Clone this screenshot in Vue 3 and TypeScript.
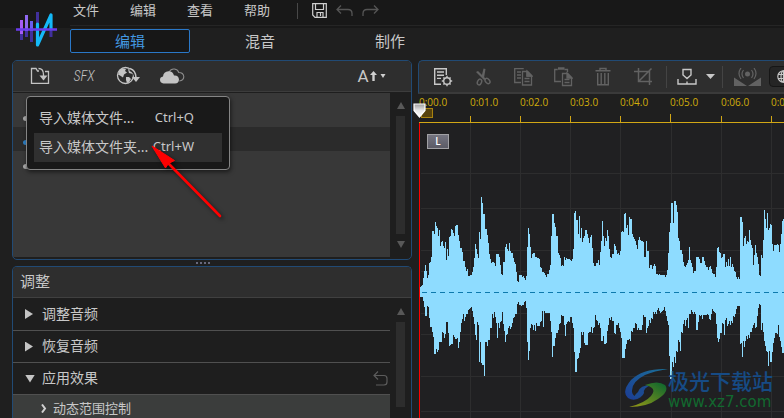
<script setup lang="ts">
import { ref } from 'vue'

const menus: string[] = ['文件', '编辑', '查看', '帮助']
const tabs: string[] = ['编辑', '混音', '制作']
const activeTab = ref(0)

interface MenuEntry { label: string; keys: string; hot: boolean }
const importMenu: MenuEntry[] = [
  { label: '导入媒体文件...', keys: 'Ctrl+Q', hot: false },
  { label: '导入媒体文件夹...', keys: 'Ctrl+W', hot: true },
]

const sections: { label: string; open: boolean }[] = [
  { label: '调整音频', open: false },
  { label: '恢复音频', open: false },
  { label: '应用效果', open: true },
]

const seconds: number[] = [0, 1, 2, 3, 4, 5, 6, 7]
const gridX: number[] = [50, 100, 150, 200, 251, 301, 351]
const gridY: number[] = [50, 85, 127, 148, 190, 211, 253, 288]

// Peak heights of the left channel, one value per pixel column.
const upper: number[] = [
  5, 6, 7, 14, 21, 27, 21, 14, 17, 29, 30, 35, 61, 61, 58,
  70, 66, 64, 56, 62, 46, 50, 51, 46, 44, 50, 32, 43, 36, 55, 56, 63, 62, 59, 56,
  66, 67, 67, 57, 51, 44, 44, 40, 31, 31, 25, 21, 23, 16, 16, 17, 17, 20, 25, 34,
  48, 43, 38, 34, 60, 53, 95, 89, 78, 78, 63, 63, 57, 49, 38, 33, 29, 30, 30, 29,
  26, 38, 38, 38, 35, 27, 18, 17, 30, 30, 45, 48, 43, 41, 49, 41, 39, 39, 34, 30,
  28, 20, 11, 10, 17, 17, 17, 15, 16, 14, 12, 16, 45, 64, 58, 45, 34, 38, 39, 39,
  35, 35, 34, 34, 33, 25, 24, 20, 20, 19, 17, 15, 18, 18, 22, 27, 56, 78, 78, 69,
  65, 56, 56, 39, 37, 34, 26, 27, 26, 35, 32, 34, 33, 33, 33, 32, 31, 33, 43, 79,
  81, 72, 72, 58, 76, 54, 64, 50, 54, 56, 62, 62, 58, 54, 49, 55, 57, 44, 29, 26,
  26, 29, 29, 32, 27,
  40, 51, 71, 56, 46, 54, 51, 62, 56, 43, 35, 34, 38, 38, 48, 46, 42, 38, 39, 37,
  41, 60, 61, 60, 78, 79, 64, 67, 57, 75, 73, 73, 58, 55, 53, 51, 47, 43, 52, 55,
  52, 51, 51, 50, 35, 35, 51, 41, 41, 24, 27, 27, 23, 26, 28, 26, 18, 18, 17, 18,
  17, 17, 17, 17, 17, 15, 17, 22, 39, 60, 69, 89, 89, 69, 91, 91, 87, 80, 54, 51,
  42, 42, 38, 30, 26, 25, 27, 29, 32, 45, 32, 29, 25, 19, 21, 21, 35, 35, 35, 33,
  29, 29, 35, 35, 31, 27, 25, 25, 22, 25, 26, 23, 19, 18, 18, 15, 25, 44, 45, 40,
  39, 34, 35, 38, 38, 25, 30, 26, 33, 26, 35, 25, 28, 25, 21, 20, 15, 13, 15, 13,
  75, 75, 70, 46, 54, 56, 48, 51, 50, 62, 52, 47, 44, 27, 37, 47, 39, 35, 28, 17,
  16, 37, 34, 52, 82, 73, 64, 79, 62, 64, 68, 67, 48, 41, 47, 47, 47, 48, 47, 40,
  48, 58, 71, 73,
]
const lower: number[] = [
  5, 5, 5, 9, 15, 24, 24, 14, 15, 26, 35, 35, 40, 45, 62,
  62, 57, 60, 58, 50, 50, 50, 40, 41, 46, 42, 30, 30, 41, 54, 53, 52, 52, 43, 45,
  47, 47, 46, 56, 50, 40, 31, 27, 22, 29, 25, 22, 22, 18, 17, 16, 15, 19, 25, 32,
  43, 48, 30, 33, 70, 50, 71, 73, 73, 84, 50, 50, 54, 48, 48, 36, 36, 22, 26, 20,
  25, 31, 46, 31, 36, 30, 29, 20, 32, 39, 50, 43, 42, 36, 34, 37, 35, 31, 26, 25,
  22, 22, 12, 10, 13, 13, 14, 13, 13, 10, 9, 16, 50, 68, 59, 36, 32, 33, 38, 33,
  39, 31, 34, 34, 34, 30, 29, 19, 35, 19, 21, 21, 21, 21, 21, 29, 40, 65, 54, 54,
  46, 41, 41, 38, 32, 31, 23, 24, 24, 33, 44, 32, 30, 29, 30, 25, 25, 31, 36, 60,
  80, 80, 67, 66, 61, 56, 40, 43, 40, 51, 53, 53, 53, 41, 40, 40, 35, 41, 36, 35,
  23, 28, 29, 33, 31,
  36, 49, 49, 44, 52, 52, 51, 39, 33, 26, 28, 25, 29, 29, 41, 42, 33, 33, 31, 36,
  40, 46, 66, 66, 66, 57, 52, 48, 48, 47, 49, 39, 40, 36, 36, 31, 32, 38, 36, 38,
  38, 38, 33, 23, 25, 25, 41, 36, 34, 28, 31, 26, 27, 20, 22, 20, 22, 18, 16, 19,
  21, 20, 19, 18, 15, 19, 24, 29, 33, 64, 87, 87, 70, 75, 65, 71, 59, 60, 48, 50,
  59, 40, 41, 32, 28, 34, 28, 26, 36, 22, 22, 18, 20, 22, 20, 22, 38, 38, 30, 23,
  24, 23, 27, 23, 23, 23, 23, 22, 23, 27, 28, 22, 17, 19, 20, 21, 32, 46, 50, 47,
  41, 41, 31, 32, 43, 28, 26, 34, 32, 29, 33, 29, 31, 24, 25, 22, 17, 14, 14, 14,
  52, 51, 65, 49, 55, 49, 44, 47, 43, 46, 40, 40, 36, 33, 31, 36, 35, 24, 16, 12,
  13, 38, 31, 40, 49, 54, 59, 60, 74, 59, 70, 70, 60, 51, 46, 41, 41, 42, 33, 45,
  49, 55, 61, 61,
]
const mid = 169
const wavePath: string = upper
  .map((up, x) => `M${x} ${mid - up}h1v${up + (lower[x] ?? up)}h-1z`)
  .join('')
</script>

<template>
  <div class="app">
    <header class="top">
      <svg class="logo" width="42" height="38" viewBox="0 0 42 38">
        <path d="M5.500 9v20" stroke="#a65cf5" stroke-width="3" />
        <path d="M10.500 4v22" stroke="#8f68f0" stroke-width="3" />
        <path d="M15.500 10v21" stroke="#6a5cf0" stroke-width="3" />
        <path d="M21.500 1v14M35 20v6M10.500 20v6M5.500 23v6M15.500 20v11" stroke="#41309c" stroke-width="3" />
        <path d="M21.500 13v21L35 4v14" fill="none" stroke="#14b9f8" stroke-width="3.200" stroke-linejoin="round" stroke-linecap="round" />
        <path d="M0 18.500h41" stroke="#6b3bee" stroke-width="2.600" />
      </svg>
      <div class="bars">
        <nav class="menubar">
          <button v-for="m in menus" :key="m" class="menu">{{ m }}</button>
          <span class="sep"></span>
          <button class="quick" aria-label="保存">
            <svg width="15" height="15" viewBox="0 0 15 15" fill="none" stroke="#cfcfcf" stroke-width="1.200">
              <path d="M.700.700h13.600v13.600H3L.700 12zM3.500 1v5.500h8V1M5 14V9.500h6V14M8.500 10v3" />
            </svg>
          </button>
          <button class="quick" aria-label="撤销">
            <svg width="17" height="12" viewBox="0 0 17 12" fill="none" stroke="#555" stroke-width="1.300">
              <path d="M5 .500L1 4.500l4 4M1 4.500h11q4 0 4 4V11" />
            </svg>
          </button>
          <button class="quick" aria-label="重做">
            <svg width="17" height="12" viewBox="0 0 17 12" fill="none" stroke="#555" stroke-width="1.300">
              <path d="M12 .500l4 4-4 4M16 4.500H5q-4 0-4 4V11" />
            </svg>
          </button>
        </nav>
        <nav class="tabs">
          <button v-for="(t, i) in tabs" :key="t" class="tab" :class="{ on: i === activeTab }" @click="activeTab = i">{{ t }}</button>
        </nav>
      </div>
    </header>

    <main class="work">
      <div class="side">
        <section class="panel library">
          <div class="tools">
            <button class="tool" aria-label="导入">
              <svg width="20" height="18" viewBox="0 0 20 18" fill="none" stroke="#c4c4c4" stroke-width="1.300">
                <path d="M9 4H7.500L6 1.500H1.500v14.800h17V4.500H15M8.500 1.500q5 0 5 6v5" />
                <path d="M9.500 8.500h8l-4 5z" fill="#c4c4c4" stroke="none" />
              </svg>
            </button>
            <button class="tool sfx">SFX</button>
            <button class="tool" aria-label="在线下载">
              <svg width="24" height="20" viewBox="0 0 24 20" fill="none" stroke="#c4c4c4" stroke-width="1.300">
                <circle cx="9.500" cy="9.500" r="8" />
                <path d="M3 5l3-2.500 4 .500-1 2 2 1.500-3 2-1 3-3-2-2-1zM10 11l3 0 2 2-2 3-2 1-1-3zM12 3l4 2 1 3-4-1z" fill="#c4c4c4" stroke="none" />
                <path d="M14 3q6 2 6 9" stroke="#2d2d2d" stroke-width="4" />
                <path d="M14 2.500q6 2 6 9.500" stroke-width="1.600" />
                <path d="M16 11h8l-4 5z" fill="#c4c4c4" stroke="none" />
              </svg>
            </button>
            <button class="tool" aria-label="云端">
              <svg width="26" height="17" viewBox="0 0 26 17">
                <path d="M10 4q2-3.500 5.500-3Q19 1.500 19.800 4.500q4.500 0 5 4 0 4-4.500 4.500" fill="none" stroke="#8d8d8d" stroke-width="1.100" />
                <path d="M4.500 15.500Q1 15 1 11.800 1 9 4 8.500 4.500 3.500 9.500 3.200q4.500 0 5.500 4.300 4.500-.500 5 4-.200 4-4 4z" fill="#c4c4c4" />
              </svg>
            </button>
            <button class="tool sort" aria-label="字号">
              <span>A</span>
              <svg width="16" height="12" viewBox="0 0 16 12" fill="#cfcfcf"><path d="M3.500 1L7 5H4.700v6H2.300V5H0zM10.500 4h5L13 8z" /></svg>
            </button>
          </div>
          <div class="body">
            <ul class="files">
              <li><i class="dot"></i></li>
              <li class="sel"><i class="dot"></i></li>
              <li><i class="dot"></i></li>
            </ul>
            <div class="scroll"><i class="up"></i><i class="thumb"></i><i class="down"></i></div>
          </div>
          <div class="popup" role="menu">
            <button v-for="e in importMenu" :key="e.keys" class="entry" :class="{ hot: e.hot }" role="menuitem">
              <span>{{ e.label }}</span><span class="keys">{{ e.keys }}</span>
            </button>
          </div>
          <svg class="pointer" width="76" height="76" viewBox="0 0 76 76">
            <path d="M18 17L69 69" stroke="#f00" stroke-width="2.600" stroke-linecap="round" />
            <path d="M1 -1L23.500 13.500 17.500 16.500 14.500 21z" fill="#f00" stroke="#f00" />
          </svg>
        </section>

        <div class="grip"><i></i><i></i><i></i><i></i></div>

        <section class="panel adjust">
          <h2>调整</h2>
          <div class="body">
            <div class="tree">
              <button v-for="s in sections" :key="s.label" class="row">
                <i class="arrow" :class="{ open: s.open }"></i>
                <span>{{ s.label }}</span>
                <svg v-if="s.open" class="reset" width="15" height="15" viewBox="0 0 15 15" fill="none" stroke="#5c5c5c" stroke-width="1.200">
                  <path d="M5 .500L1 4.500l4 4M1 4.500h10q3 0 3 3V11q0 3-3 3H3" />
                </svg>
              </button>
              <button class="row child">
                <svg width="6" height="9" viewBox="0 0 6 9" fill="none" stroke="#d0d0d0" stroke-width="2"><path d="M1 .500l3 4-3 4" /></svg>
                <span>动态范围控制</span>
              </button>
            </div>
            <div class="scroll"><i class="up"></i><i class="thumb"></i></div>
          </div>
        </section>
      </div>

      <section class="editor">
        <div class="tools edit">
          <button class="tool" aria-label="属性">
            <svg width="20" height="20" viewBox="0 0 20 20" fill="none" stroke="#c8c8c8" stroke-width="1.400">
              <path d="M8 17.300H1.700V1.700h11.600V8M4 5h7M4 8.200h7M4 11.400h4" />
              <circle cx="14" cy="14" r="3.300" />
              <path d="M14 8.800v2M14 17.200v2M8.800 14h2M17.200 14h2M10.400 10.400l1.300 1.300M16.300 16.300l1.300 1.300M17.600 10.400l-1.300 1.300M11.700 16.300l-1.300 1.300" />
            </svg>
          </button>
          <button class="tool" aria-label="剪切">
            <svg width="18" height="20" viewBox="0 0 18 20" fill="none" stroke="#626262" stroke-width="1.400">
              <path d="M2 5l2-1 8 8-2 1zM9.500 1.500l2 .500-1.500 9-2.500-1z" fill="#626262" stroke="none" />
              <ellipse cx="5.500" cy="15" rx="2" ry="3" transform="rotate(25 5.500 15)" />
              <ellipse cx="13.500" cy="14" rx="2" ry="3" transform="rotate(-40 13.500 14)" />
            </svg>
          </button>
          <button class="tool" aria-label="复制">
            <svg width="20" height="20" viewBox="0 0 20 20" fill="none" stroke="#626262" stroke-width="1.300">
              <path d="M8 15.500H1.700V1.700h9M4 5h4M4 8h4M4 11h4M9.500 4.500h5l4 4v9.500h-9zM14 4.500v4.500h4.500M11.500 11.500h5M11.500 14.500h5" />
              <path d="M14 4l5 5h-5z" fill="#626262" />
            </svg>
          </button>
          <button class="tool" aria-label="粘贴">
            <svg width="20" height="20" viewBox="0 0 20 20" fill="none" stroke="#626262" stroke-width="1.300">
              <path d="M8 14.500H1.700V2.500h3M11.500 2.500h3V5M9.500 6.500h5l4 4v8h-9zM11.500 12.500h5M11.500 15.500h5" />
              <path d="M5 1.500h6.500" stroke-width="2.400" /><path d="M14 6l5 5h-5z" fill="#626262" />
            </svg>
          </button>
          <button class="tool" aria-label="删除">
            <svg width="16" height="19" viewBox="0 0 16 19" fill="none" stroke="#626262" stroke-width="1.400">
              <path d="M.500 3.700h15M5 3.500V1.500h6v2M2.700 6v11.800h10.600V6M6.200 6v12M9.800 6v12" />
            </svg>
          </button>
          <button class="tool" aria-label="裁剪">
            <svg width="19" height="19" viewBox="0 0 19 19" fill="none" stroke="#626262" stroke-width="1.500">
              <path d="M0 4.500h15.500V18M4.500 1v13.500H18M4.500 14.500L17.500 1.500" />
            </svg>
          </button>
          <span class="bar"></span>
          <button class="tool marker" aria-label="标记">
            <svg width="20" height="18" viewBox="0 0 20 18" fill="none" stroke="#c8c8c8" stroke-width="1.400">
              <path d="M6 1.500h8V7l-4 3.500L6 7zM1 11v5h18v-5M10 13.500V16" />
            </svg>
          </button>
          <button class="tool drop" aria-label="标记选项">
            <svg width="9" height="5" viewBox="0 0 9 5"><path d="M0 0h9L4.500 5z" fill="#c8c8c8" /></svg>
          </button>
          <span class="bar"></span>
          <button class="tool fade" aria-label="淡化">
            <svg width="27" height="18" viewBox="0 0 27 18" fill="#626262">
              <path d="M0 9.500L13 18H0zM27 9.500L14 18h13z" />
              <circle cx="13.500" cy="6" r="2.500" />
              <path d="M9.500 2q-3 4 0 8M17.500 2q3 4 0 8M7 0Q3 5.500 7 11M20 0q4 5.500 0 11" fill="none" stroke="#626262" stroke-width="1.200" />
            </svg>
          </button>
          <button class="view" aria-label="频谱">
            <svg width="13" height="13" viewBox="0 0 13 13" fill="none" stroke="#c8c8c8" stroke-width="1.200">
              <circle cx="6.500" cy="6.500" r="5.700" /><ellipse cx="6.500" cy="6.500" rx="2.500" ry="5.700" /><path d="M1 4.500h11M1 8.500h11M6.500 1v11" />
            </svg>
          </button>
        </div>
        <div class="ruler">
          <span v-for="s in seconds" :key="s" class="tick" :class="{ major: s === 5, first: s === 0 }">0:0{{ s }}.0</span>
          <i class="range"></i>
          <svg class="head" width="14" height="15" viewBox="0 0 14 15">
            <defs><linearGradient id="knob" x2="0" y2="1"><stop offset="0" stop-color="#9c9c9c" /><stop offset=".500" stop-color="#e8e8e8" /><stop offset="1" stop-color="#fff" /></linearGradient></defs>
            <path d="M1 1h11v6.500L6.500 14 1 7.500z" fill="url(#knob)" stroke="#fff" stroke-width="1.200" />
          </svg>
        </div>
        <div class="track">
          <svg class="wave" width="364" height="295" viewBox="0 0 364 295" shape-rendering="crispEdges">
            <g fill="#2d2d2e">
              <rect v-for="x in gridX" :key="'x' + x" :x="x" y="0" width="1" height="295" />
              <rect v-for="y in gridY" :key="'y' + y" x="1" :y="y" width="363" height="1" />
            </g>
            <path :d="wavePath" fill="#8edcff" />
            <path d="M2 169.500h362" stroke="#0d79ad" stroke-dasharray="5 4" />
          </svg>
          <span class="channel">L</span>
          <div class="mark">
            <svg width="43" height="42" viewBox="0 0 43 42">
              <defs>
                <linearGradient id="blue" x1="0" y1="1" x2="1" y2="0"><stop offset="0" stop-color="#1c3c94" /><stop offset="1" stop-color="#1b7199" /></linearGradient>
                <linearGradient id="green" x1="0" y1="1" x2="1" y2="0"><stop offset="0" stop-color="#9a9a16" /><stop offset="1" stop-color="#08652f" /></linearGradient>
              </defs>
              <path d="M43 1Q18 0 6 12-4 24 3 30q6 4 13-1-8 1-9-5Q6 14 20 7 29 3 43 1z" fill="url(#blue)" />
              <path d="M13 24q2-7 13-7-8 3-7 8-2 5-8 5-4-1 2-6z" fill="#1c4a91" />
              <path d="M20 17q13-5 20 0 5 6-7 14-11 8-29 8 16-4 22-11 7-8-6-11z" fill="url(#green)" />
            </svg>
            <div class="words"><b>极光下载站</b><span>www.xz7.com</span></div>
          </div>
        </div>
      </section>
    </main>
  </div>
</template>

<style>
body { margin: 0; background: #1f1f1f; overflow: hidden; }
</style>

<style scoped>
.app { display: flex; flex-direction: column; height: 100vh; background: #1f1f1f; color: #c8c8c8; font-family: "Noto Sans", "Noto Sans CJK SC", sans-serif; font-size: 14px; }
button { margin: 0; padding: 0; border: 0; background: none; color: inherit; font: inherit; line-height: inherit; cursor: pointer; }
svg { display: block; flex: none; }
.top { display: flex; height: 60px; flex: none; background: linear-gradient(#181818 28px, #1f1f1f 28px); }
.logo { margin: 11px 12px 0 16px; }
.bars { flex: 1; }
.menubar { display: flex; align-items: center; height: 26px; box-sizing: border-box; padding: 0 0 4px 3px; border-bottom: 1px solid #252525; margin-bottom: 3px; font-size: 13px; line-height: 20px; }
.menu { margin-right: 31px; padding-bottom: 2px; }
.sep { width: 1px; height: 16px; margin-right: 14px; margin-left: -4px; background: #484848; }
.quick { margin-right: 9px; }
.tabs { display: flex; gap: 10px; font-size: 15px; line-height: 22px; }
.tab { width: 120px; height: 24px; box-sizing: border-box; border: 1px solid transparent; border-radius: 2px; }
.tab.on { border-color: #2a78c8; background: #171717; color: #4398e0; }

.work { display: flex; flex: 1; min-height: 0; gap: 6px; }
.side { display: flex; flex-direction: column; flex: 0 0 400px; margin-left: 12px; }
.panel { position: relative; display: flex; flex-direction: column; box-sizing: border-box; border: 1px solid #214a74; border-radius: 5px; background: #1e1e1e; }
.library { height: 200px; flex: none; }
.adjust { flex: 1; min-height: 0; border-bottom: 0; border-radius: 5px 5px 0 0; overflow: hidden; }
.tools { display: flex; align-items: center; height: 31px; flex: none; box-sizing: border-box; background: #2e2e2e; border-bottom: 1px solid #3c3c3c; border-radius: 4px 4px 0 0; }
.library .tools { padding: 0 26px 0 5px; }
.tool { display: flex; align-items: center; justify-content: center; width: 40px; height: 30px; flex: none; }
.library .tool { width: 44px; }
.library .sfx { font: italic 300 14px "Roboto Condensed", "Open Sans Condensed", Lato, sans-serif; color: #c0c0c0; }
.library .sort { width: 27px; margin-left: auto; gap: 1px; font: 17px Roboto, sans-serif; }
.body { display: flex; flex: 1; min-height: 0; }
.files { flex: 1; margin: 1px 0 2px; padding: 10px 0 0; list-style: none; background: #383838; }
.files li { display: flex; align-items: center; height: 24px; padding: 6px 10px 0; box-sizing: border-box; }
.files .sel { background: #2b2b2b; }
.dot { width: 6px; height: 5px; border-radius: 50%; background: #aaa; }
.sel .dot { background: #2e7fc4; }
.scroll { display: flex; flex-direction: column; align-items: center; width: 21px; flex: none; padding: 10px 0 11px; box-sizing: border-box; gap: 7px; }
.up, .down { border: 4px solid transparent; }
.up { border-top: 0; border-bottom: 7px solid #585858; }
.down { border-bottom: 0; border-top: 7px solid #585858; }
.thumb { flex: 1; width: 9px; background: #2d2d2d; }
.popup { position: absolute; left: 13px; top: 35px; width: 204px; box-sizing: border-box; padding: 7px; border: 1px solid #858585; border-radius: 4px; background: #191919; box-shadow: 1px 2px 4px #0008; z-index: 2; }
.entry { display: flex; justify-content: space-between; width: 100%; height: 29px; padding: 0 28px 3px 5px; box-sizing: border-box; align-items: center; white-space: nowrap; }
.entry.hot { background: #303030; }
.keys { font-size: 13px; }
.pointer { position: absolute; left: 138px; top: 86px; z-index: 3; overflow: visible; filter: drop-shadow(2px 2px 2px #0009); }
.grip { display: flex; justify-content: center; align-items: center; gap: 2px; height: 6px; padding-right: 18px; flex: none; }
.grip i { width: 2px; height: 2px; background: #68687c; }

h2 { margin: 0; padding-left: 7px; height: 31px; flex: none; box-sizing: border-box; background: #2e2e2e; border-bottom: 1px solid #404040; font-size: 15px; font-weight: 400; line-height: 28px; }
.tree { flex: 1; }
.row { display: flex; align-items: center; width: 100%; height: 32px; box-sizing: border-box; padding: 0 2px 0 12px; border-bottom: 1px solid #505050; text-align: left; }
.row:first-child { height: 33px; }
.row span { flex: 1; padding-bottom: 3px; }
.arrow { width: 8px; height: 10px; margin-right: 9px; background: #c4c4c4; clip-path: polygon(0 0, 100% 50%, 0 100%); }
.arrow.open { width: 10px; height: 8px; margin-right: 7px; clip-path: polygon(0 0, 100% 0, 50% 100%); }
.child { padding-left: 28px; gap: 6px; height: 28px; background: #3b3d3c; font-size: 13px; }

.editor { position: relative; display: flex; flex-direction: column; flex: 1; min-width: 0; }
.edit { height: 34px; padding-left: 4px; border-top: 1px solid #214a74; border-left: 1px solid #214a74; border-bottom: 2px solid #3a3a3a; border-radius: 5px 0 0 0; overflow: hidden; }
.bar { width: 1px; height: 22px; margin: 0 2px 0 3px; flex: none; background: #444; }
.marker { width: 36px; }
.drop { width: 10px; margin-right: 4px; }
.fade { width: 44px; }
.view { display: flex; align-items: center; height: 21px; padding: 0 7px; border: 1px solid #161616; border-radius: 4px; background: #252525; }
.ruler { position: relative; display: flex; height: 29px; flex: none; box-sizing: border-box; border-bottom: 1px solid #d2a716; margin-left: 1px; }
.tick { position: relative; width: 50px; flex: none; color: #d2ae0a; font: 10px/15px "Open Sans", sans-serif; padding-top: 1px; }
.tick.first { width: 51px; }
.tick.major { padding-right: 1px; }
.tick::after { content: ""; position: absolute; left: 0; bottom: 0; width: 1px; height: 6px; background: #d2a716; }
.tick.first::after { display: none; }
.tick.major::after { height: 8px; }
.range { position: absolute; left: 2px; top: 14px; width: 12px; height: 10px; box-sizing: border-box; background: #57430e; border: 1px solid #a8820f; }
.head { position: absolute; left: -6px; top: 9px; z-index: 2; }
.track { position: relative; flex: 1; min-height: 0; overflow: hidden; margin-left: 1px; border-left: 1px solid #f00; background: #202022; }
.channel { position: absolute; left: 7px; top: 11px; width: 22px; height: 15px; box-sizing: border-box; border: 1px solid #a0a0a4; background: linear-gradient(#747480, #5b5b66); color: #fff; font: 600 10px/13px "Open Sans", sans-serif; text-align: center; }
.mark { position: absolute; right: 11px; bottom: 7px; display: flex; }
.words { display: flex; flex-direction: column; gap: 2px; }
.words b { color: #164b85; font: 500 21px/24px "Noto Sans CJK SC", sans-serif; }
.words span { color: #12692f; font: 15px/17px "DejaVu Sans", sans-serif; }
</style>
